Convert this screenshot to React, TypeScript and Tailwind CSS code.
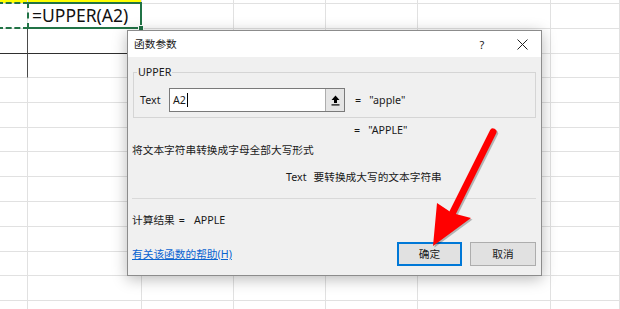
import React from "react";

const colWidths = [28, 114, 92, 92, 92, 133, 69];
const rowHeights = [4, 25, 25, 24, 25, 25, 24, 25, 25, 25, 25, 24, 25, 25];

const ui = { fontFamily: '"Noto Sans", "Noto Sans CJK SC", sans-serif' };

function Sheet() {
  return (
    <div className="flex flex-col">
      {rowHeights.map((h, r) => (
        <div key={r} className="flex" style={{ height: h }}>
          {colWidths.map((w, c) => {
            const yellow = r === 0 && c < 2;
            const darkBottom = r === 2 && c < 2;
            const darkRight = (r === 2 || r === 3) && c === 0;
            return (
              <div
                key={c}
                className={
                  "shrink-0 border-b border-r " +
                  (yellow ? "bg-[#ffff00] " : "bg-white ") +
                  (darkBottom ? "border-b-[#2f2f2f] " : "border-b-[#e1e1e1] ") +
                  (darkRight ? "border-r-[#4a4a4a]" : "border-r-[#e1e1e1]")
                }
                style={{ width: w }}
              />
            );
          })}
        </div>
      ))}
    </div>
  );
}

function UploadIcon() {
  return (
    <svg width="9" height="11" viewBox="0 0 9 11">
      <path d="M4.5 0.5 L8.5 5 L6 5 L6 8 L3 8 L3 5 L0.5 5 Z" fill="#000" />
      <rect x="0.5" y="9.3" width="8" height="1.2" fill="#000" />
    </svg>
  );
}

function Dialog() {
  return (
    <div
      className="absolute left-[127px] top-[30px] w-[415px] border border-[#8c8c8c] bg-[#f0f0f0] text-[10.7px] text-[#1a1a1a] shadow-[0_3px_14px_rgba(0,0,0,0.28)]"
      style={ui}
    >
      <div className="flex h-[26px] items-center bg-white pl-[6px] pr-[9px]">
        <span className="text-[10.7px] leading-none">函数参数</span>
        <span className="ml-auto flex w-[20px] justify-center text-[11px] leading-none">?</span>
        <span className="ml-[20px] flex w-[20px] justify-center">
          <svg width="11" height="11" viewBox="0 0 11 11">
            <path d="M0.5 0.5 L10.5 10.5 M10.5 0.5 L0.5 10.5" stroke="#222" strokeWidth="1" />
          </svg>
        </span>
      </div>
      <div className="flex flex-col px-[4px] pb-[9px] pt-[15px]">
        <div className="relative ml-[1px] mr-[1px] h-[46px] border border-[#d5d5d5] pt-[15px]">
          <span className="absolute left-[3px] top-[-8px] bg-[#f0f0f0] px-[1px] leading-[14px]">UPPER</span>
          <div className="flex h-[24px] items-center pl-[6px]">
            <span className="w-[29px] leading-none">Text</span>
            <div className="flex h-[24px] w-[176px] items-stretch border border-[#7a7a7a] bg-white">
              <div className="flex flex-1 items-center pl-[3px]">
                <span className="leading-none">A2</span>
                <span className="ml-[1px] h-[14px] w-px bg-black" />
              </div>
              <div className="flex w-[19px] items-center justify-center border-l border-[#adadad] bg-[#e5e5e5]">
                <UploadIcon />
              </div>
            </div>
            <span className="ml-[10px] leading-none">=</span>
            <span className="ml-[8px] leading-none">"apple"</span>
          </div>
        </div>
        <div className="mt-[4px] flex h-[16px] items-center pl-[222px]">
          <span>=</span>
          <span className="ml-[8px]">"APPLE"</span>
        </div>
        <div className="mt-[4px] flex h-[16px] items-center">将文本字符串转换成字母全部大写形式</div>
        <div className="mt-[11px] flex h-[16px] items-center pl-[154px]">
          <span>Text</span>
          <span className="ml-[7px]">要转换成大写的文本字符串</span>
        </div>
        <div className="mt-[13px] mr-[1px] h-px bg-[#d9d9d9]" />
        <div className="mt-[13px] flex h-[16px] items-center">
          <span>计算结果</span>
          <span className="ml-[4px]">=</span>
          <span className="ml-[9px]">APPLE</span>
        </div>
        <div className="mt-[14px] flex h-[24px] items-center">
          <span className="text-[#0a64d0] underline">有关该函数的帮助(H)</span>
          <div className="ml-auto flex h-[24px] w-[65px] items-center justify-center border-2 border-[#0078d7] bg-[#e1e1e1]">
            确定
          </div>
          <div className="ml-[8px] mr-[1px] flex h-[24px] w-[66px] items-center justify-center border border-[#adadad] bg-[#e1e1e1]">
            取消
          </div>
        </div>
      </div>
    </div>
  );
}

export default function App() {
  return (
    <div className="relative h-[309px] w-[620px] overflow-hidden bg-white">
      <Sheet />
      {/* copy marquee around A2 */}
      <div className="absolute left-[-3px] top-[2px] h-[27px] w-[32px] border-2 border-dashed border-[#217346]" />
      {/* selected formula cell */}
      <div className="absolute left-[27px] top-[2px] flex h-[27px] w-[115px] items-center border-2 border-[#217346] border-l-transparent pl-[3px]">
        <span
          className="text-[17.5px] leading-none text-[#111]"
          style={ui}
        >
          =UPPER(A2)
        </span>
      </div>
      <div className="absolute left-[138px] top-[25px] h-[6px] w-[6px] border border-white bg-[#217346]" />
      <Dialog />
      <svg className="pointer-events-none absolute left-0 top-0" width="620" height="309" viewBox="0 0 620 309">
        <g opacity="0.25" transform="translate(1.5,1.5)">
          <line x1="493" y1="132" x2="453" y2="212" stroke="#000" strokeWidth="7" strokeLinecap="round" />
          <polygon points="433,246 437,203 452,213 471,218" fill="#000" />
        </g>
        <line x1="493" y1="132" x2="453" y2="212" stroke="#ff0000" strokeWidth="7" strokeLinecap="round" />
        <polygon points="433,246 437,203 452,213 471,218" fill="#ff0000" />
      </svg>
    </div>
  );
}
